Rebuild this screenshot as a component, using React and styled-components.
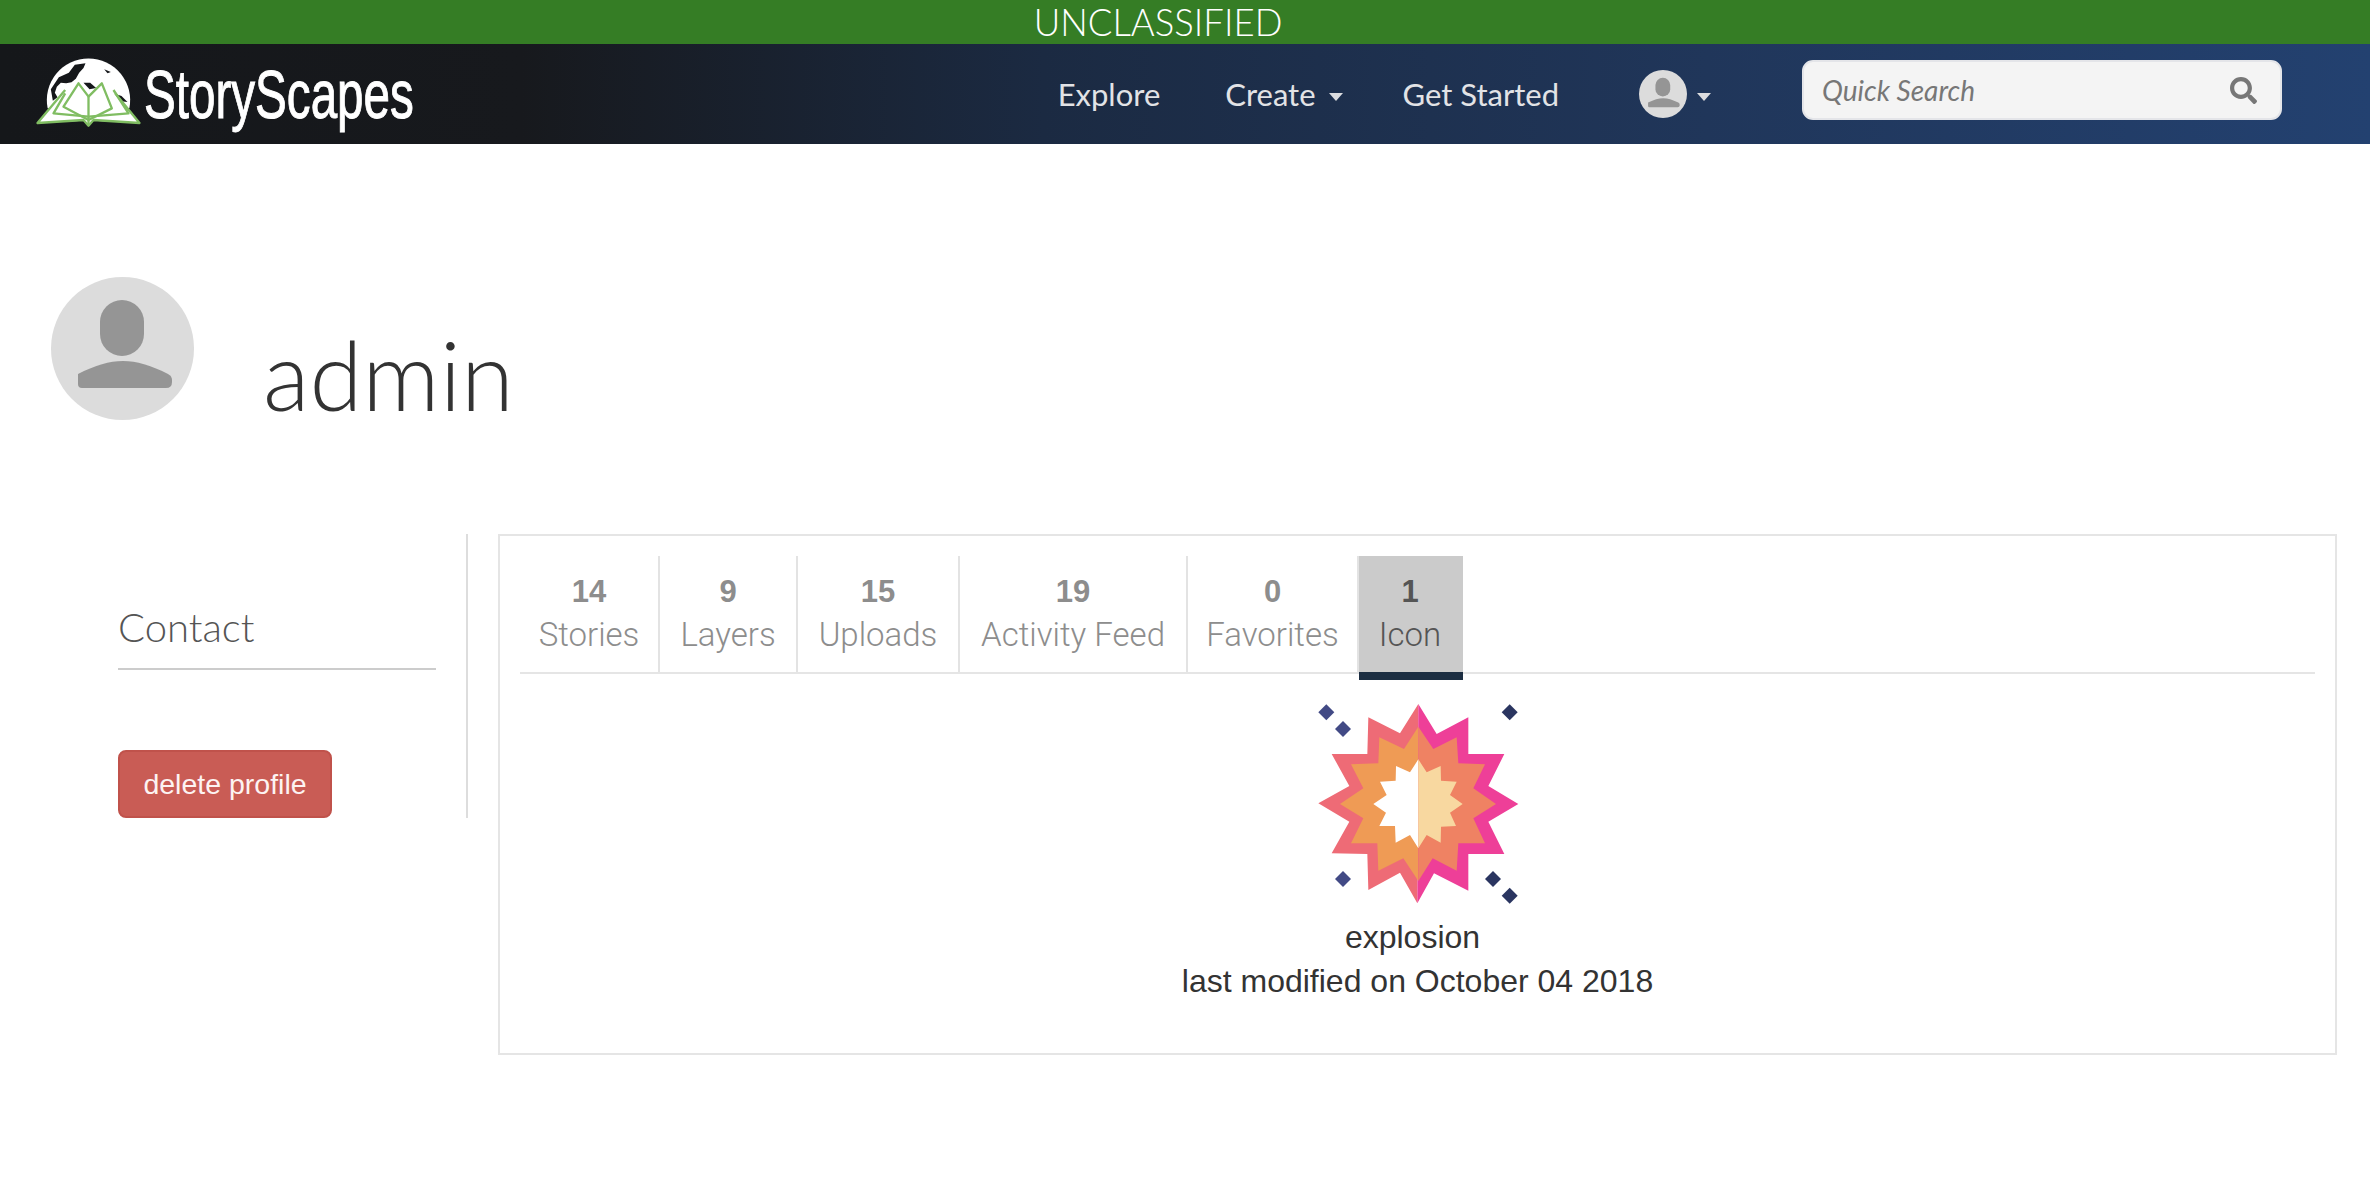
import React from 'react'
import styled, { createGlobalStyle } from 'styled-components'
import { FaSearch } from 'react-icons/fa'

const GlobalStyle = createGlobalStyle`
  html, body { margin: 0; padding: 0; background: #fff; }
  body { font-family: "Liberation Sans", Arial, sans-serif; color: #333; }
  * { box-sizing: border-box; }
`

const Banner = styled.div`
  height: 44px;
  background: #357d25;
  color: #fff;
  font: 300 36.5px/44px Lato, sans-serif;
  text-align: center;
  padding-right: 54px;
  overflow: hidden;
`

const Nav = styled.nav`
  height: 100px;
  display: flex;
  align-items: center;
  justify-content: space-between;
  padding: 0 88px 0 35px;
  background: linear-gradient(90deg, #15171a 0%, #17191d 22%, #1b2a42 44%, #20365a 72%, #234170 100%);
`

const Brand = styled.a`
  display: flex;
  align-items: center;
  gap: 2px;
  color: #fff;
`

const BrandName = styled.span`
  display: block;
  width: 267px;
  font: 400 68px/100px "Liberation Sans", sans-serif;
  transform: scaleX(0.7);
  transform-origin: left center;
  white-space: nowrap;
  -webkit-text-stroke: 1px #fff;
`

const NavGroup = styled.div`
  display: flex;
  align-items: center;
`

const NavLink = styled.a`
  display: flex;
  align-items: center;
  gap: ${p => p.$inner || 13}px;
  margin-left: ${p => p.$gap}px;
  color: #e2e3e6;
  font: 400 31px/40px Lato, sans-serif;
`

const Caret = styled.i`
  display: block;
  border-left: 7px solid transparent;
  border-right: 7px solid transparent;
  border-top: 8px solid #dcdde0;
  margin-top: 5px;
`

const SmallAvatar = styled.span`
  display: flex;
  width: 48px;
  height: 48px;
`

const Search = styled.form`
  display: flex;
  align-items: center;
  width: 480px;
  height: 60px;
  margin: -8px 0 0 91px;
  padding: 0 23px 0 16px;
  background: #f4f4f4;
  border: 2px solid #e4e5e9;
  border-radius: 11px;
  color: #777;
  font-size: 27px;
`

const SearchInput = styled.input`
  flex: 1;
  min-width: 0;
  border: 0;
  outline: 0;
  background: transparent;
  font: italic 400 28px Lato, sans-serif;
  &::placeholder { color: #777; opacity: 1; }
`

const ProfileHead = styled.header`
  display: flex;
  align-items: flex-start;
  gap: 69px;
  margin: 133px 0 114px 51px;
`

const Name = styled.h1`
  margin: 50px 0 0;
  font: 300 96px/93px Lato, sans-serif;
  color: #333;
`

const Body = styled.main`
  display: flex;
  align-items: flex-start;
  padding: 0 33px 0 118px;
`

const Sidebar = styled.aside`
  flex: none;
  width: 350px;
  height: 284px;
  padding: 68px 30px 0 0;
  border-right: 2px solid #ddd;
`

const SideTitle = styled.h3`
  margin: 0 0 80px;
  padding-bottom: 16px;
  border-bottom: 2px solid #ccc;
  font: 300 40px/50px Lato, sans-serif;
  color: #555;
`

const DeleteButton = styled.button`
  display: block;
  width: 214px;
  height: 68px;
  padding: 0;
  background: #c95c55;
  border: 2px solid #c0524b;
  border-radius: 8px;
  color: #fdf3f2;
  font: 400 28.5px "Liberation Sans", sans-serif;
`

const Panel = styled.section`
  flex: 1;
  height: 521px;
  margin-left: 30px;
  padding: 20px 20px 0;
  border: 2px solid #e5e5e5;
`

const Tabs = styled.div`
  display: flex;
  border-bottom: 2px solid #e5e5e5;
`

const Tab = styled.a`
  position: relative;
  display: block;
  flex: none;
  width: ${p => p.$width}px;
  height: 116px;
  padding-top: 16px;
  text-align: center;
  background: ${p => (p.$active ? '#cbcbcb' : 'transparent')};
  border-right: 2px solid ${p => (p.$active ? 'transparent' : '#e3e3e3')};
  color: ${p => (p.$active ? '#555' : '#8d8d8d')};
  &:last-child::after {
    content: '';
    position: absolute;
    left: 0;
    right: -2px;
    top: 116px;
    height: 8px;
    background: #1c2e42;
  }
`

const TabCount = styled.b`
  display: block;
  font: 700 31px/40px "Liberation Sans", sans-serif;
`

const TabLabel = styled.span`
  display: block;
  font: 300 33px/46px Roboto, "Liberation Sans", sans-serif;
  white-space: nowrap;
`

const IconCard = styled.div`
  display: flex;
  flex-direction: column;
  align-items: center;
  padding-top: 6px;
  color: #333;
  font: 400 32px/44px "Liberation Sans", sans-serif;
  svg { margin-right: 6px; }
`

const IconName = styled.div`
  margin-top: -5px;
  padding-right: 10px;
`

const tabs = [
  ['14', 'Stories', 140],
  ['9', 'Layers', 138],
  ['15', 'Uploads', 162],
  ['19', 'Activity Feed', 228],
  ['0', 'Favorites', 171],
  ['1', 'Icon', 104],
]

function Person({ size }) {
  return (
    <svg width={size} height={size} viewBox="0 0 143 143">
      <circle cx="71.5" cy="71.5" r="71.5" fill="#dcdcdc" />
      <rect x="49" y="23" width="44" height="56" rx="22" fill="#959595" />
      <path d="M27 97 C45 88 58 84 72 84 C86 84 99 88 117 97 Q121 99 121 103 V105 Q121 111 115 111 H31 Q27 111 27 107 V102 Q27 99 27 97 Z" fill="#959595" />
    </svg>
  )
}

function Logo() {
  return (
    <svg width="107" height="72" viewBox="15 24 320 216">
      <path d="M52.5 175 A125 125 0 1 1 297.5 175 Z" fill="#fff" />
      <path d="M116 68 L134 44 L166 40 L160 54 L147 68 L137 86 L124 97 L108 100 L92 98 L80 110 L74 128 L82 142 L68 152 L62 118 L86 82 Z" fill="#15171a" />
      <path d="M160 98 L180 98 L198 114 L178 118 Z" fill="#15171a" />
      <path d="M222 58 L242 66 L232 70 Z" fill="#15171a" />
      <path d="M245 128 L274 138 L292 156 L258 152 Z" fill="#15171a" />
      <path d="M105 120 L145 100 L175 140 L215 100 L255 130 L330 220 L190 212 L175 228 L160 212 L20 220 Z" fill="#fff" />
      <g fill="none" stroke="#80bd62" strokeWidth="7" strokeLinejoin="round">
        <path d="M105 120 L22 219 L160 210 L175 227 L190 210 L328 219 L255 130" />
        <path d="M105 130 L70 190 L175 200 L295 190 L250 120" />
        <path d="M145 100 L175 140 L215 100 L245 175 L175 210 L100 170 Z" />
        <path d="M175 140 V222" />
      </g>
    </svg>
  )
}

function Explosion() {
  return (
    <svg width="250" height="240" viewBox="0 0 750 720">
      <polygon fill="#ee6b76" points="385,72 330,160 235,112 232,222 125,222 178,318 85,370 178,425 125,520 232,522 235,630 330,578 382,670" />
      <polygon fill="#ee3f98" points="385,72 440,162 535,112 535,222 643,222 595,318 685,372 595,425 643,522 535,522 535,632 432,580 382,670" />
      <polygon fill="#ef9b55" points="385,140 342,207 268,172 265,250 183,253 220,325 150,372 220,415 183,490 262,490 265,572 340,535 385,603" />
      <polygon fill="#ef8263" points="385,140 430,207 500,172 505,250 585,253 550,325 618,372 550,415 585,490 505,490 500,572 428,535 385,603" />
      <polygon fill="#fff" points="385,238 360,277 318,258 317,302 270,305 290,345 250,372 288,398 268,438 315,438 317,488 360,465 385,505" />
      <polygon fill="#f8d8a0" points="385,238 410,277 452,258 453,302 500,305 480,345 518,372 480,398 498,438 453,440 452,488 410,465 385,505" />
      <g fill="#424a85">
        <polygon points="109,73 133,97 109,121 85,97" />
        <polygon points="159,123 183,147 159,171 135,147" />
        <polygon points="159,573 183,597 159,621 135,597" />
      </g>
      <g fill="#2a3560">
        <polygon points="659,73 683,97 659,121 635,97" />
        <polygon points="609,573 633,597 609,621 585,597" />
        <polygon points="659,623 683,647 659,671 635,647" />
      </g>
    </svg>
  )
}

export default function App() {
  return (
    <>
      <GlobalStyle />
      <Banner>UNCLASSIFIED</Banner>
      <Nav>
        <Brand>
          <Logo />
          <BrandName>StoryScapes</BrandName>
        </Brand>
        <NavGroup>
          <NavLink $gap={0}>Explore</NavLink>
          <NavLink $gap={65}>Create <Caret /></NavLink>
          <NavLink $gap={60}>Get Started</NavLink>
          <NavLink $gap={80} $inner={10}>
            <SmallAvatar><Person size={48} /></SmallAvatar>
            <Caret />
          </NavLink>
          <Search>
            <SearchInput placeholder="Quick Search" />
            <FaSearch />
          </Search>
        </NavGroup>
      </Nav>
      <ProfileHead>
        <Person size={143} />
        <Name>admin</Name>
      </ProfileHead>
      <Body>
        <Sidebar>
          <SideTitle>Contact</SideTitle>
          <DeleteButton>delete profile</DeleteButton>
        </Sidebar>
        <Panel>
          <Tabs>
            {tabs.map(([count, label, width]) => (
              <Tab key={label} $width={width} $active={label === 'Icon'}>
                <TabCount>{count}</TabCount>
                <TabLabel>{label}</TabLabel>
              </Tab>
            ))}
          </Tabs>
          <IconCard>
            <Explosion />
            <IconName>explosion</IconName>
            <div>last modified on October 04 2018</div>
          </IconCard>
        </Panel>
      </Body>
    </>
  )
}
